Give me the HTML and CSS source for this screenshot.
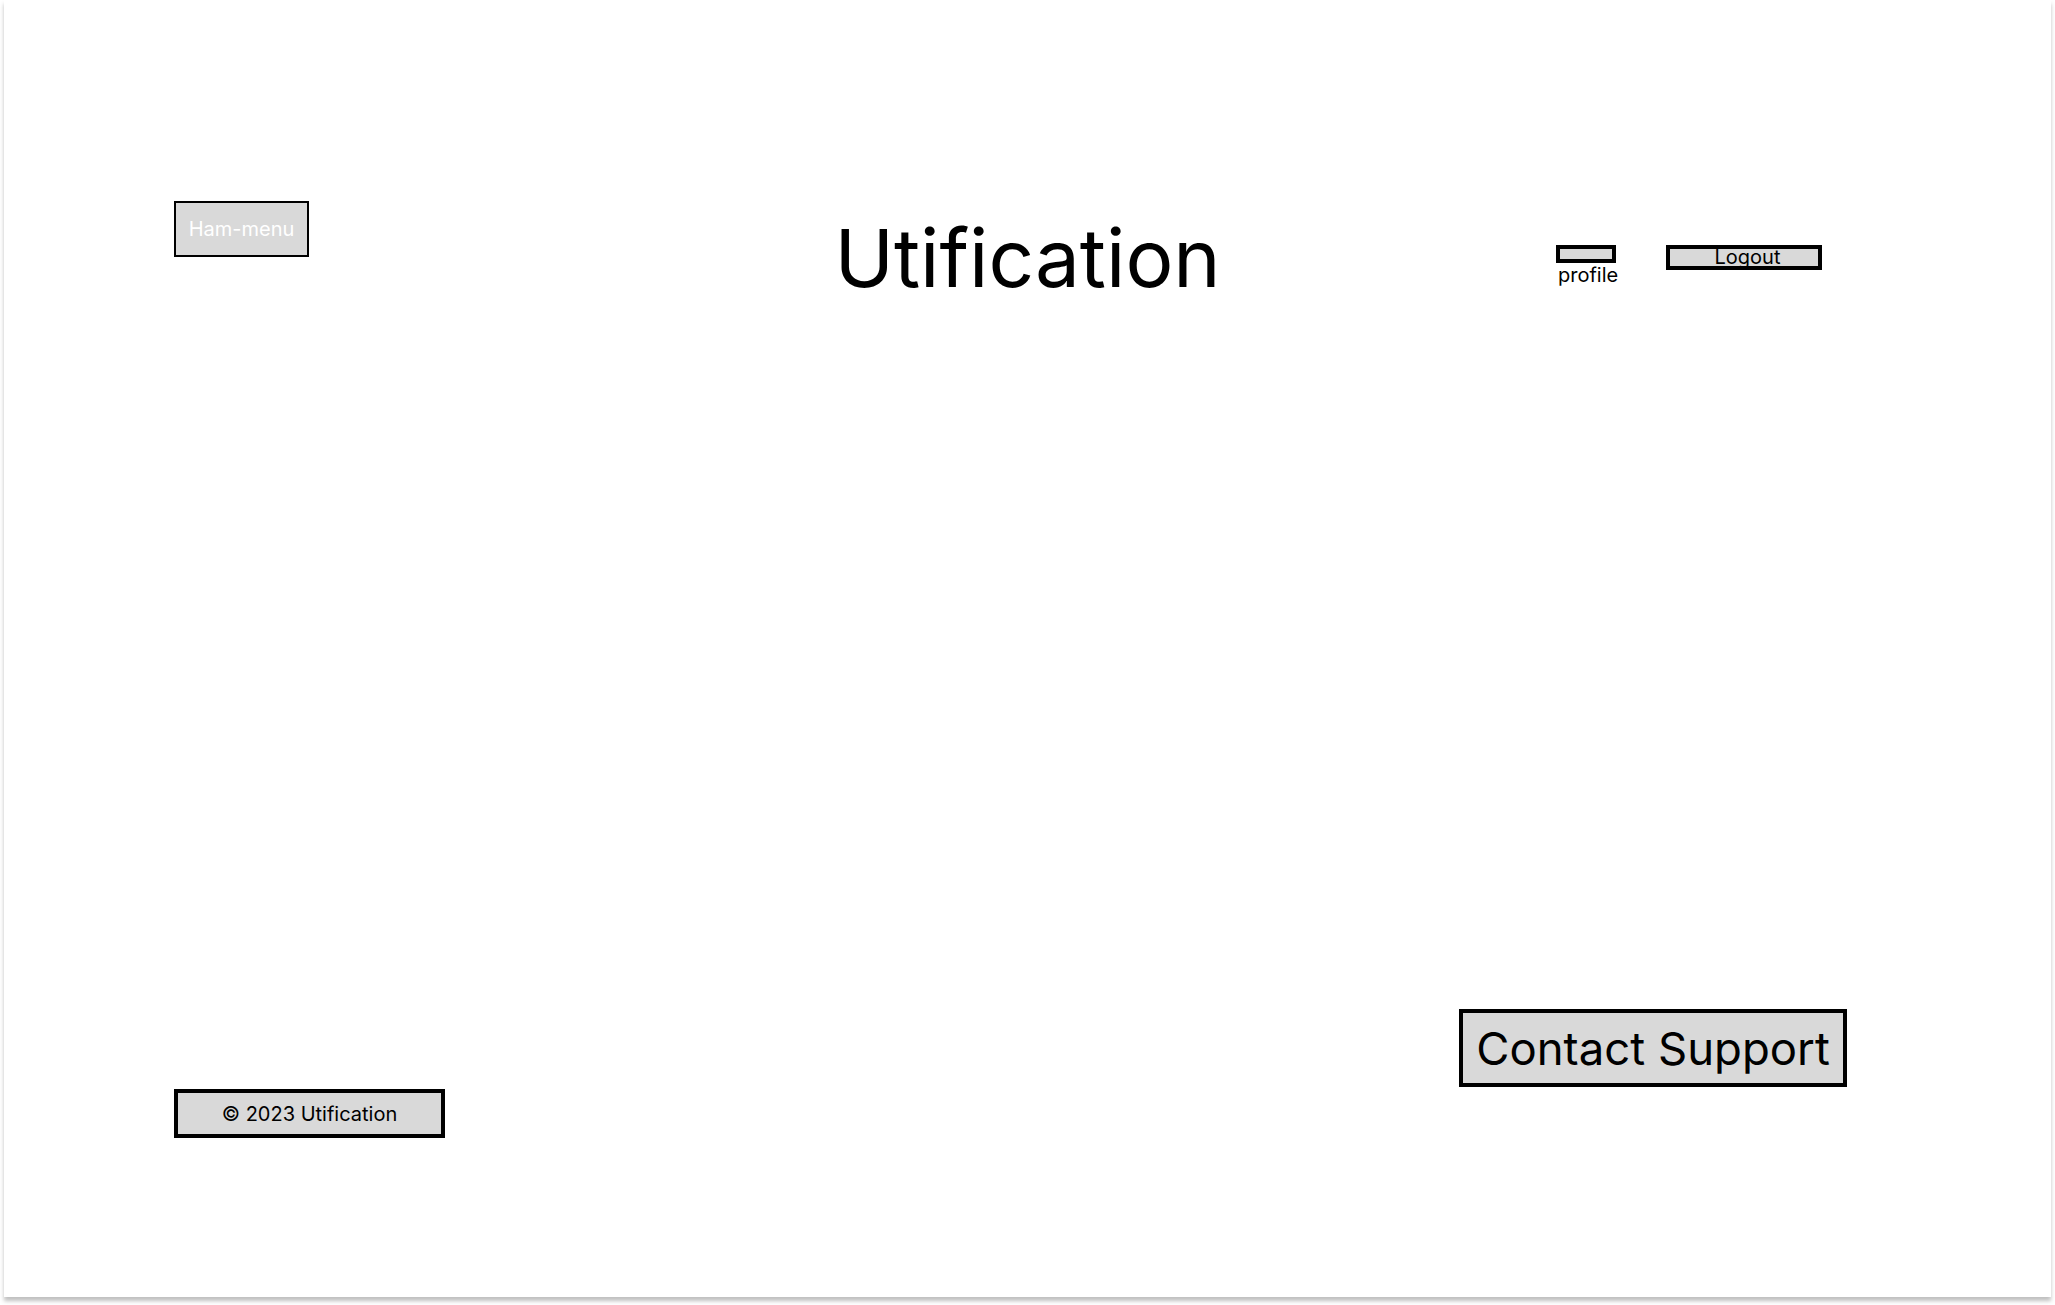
FILE: index.html
```html
<!DOCTYPE html>
<html lang="en">
<head>
<meta charset="utf-8">
<title>Utification</title>
<link rel="stylesheet" href="styles.css">
</head>
<body>
<div class="card">
  <header class="top">
    <div class="top-left">
      <button class="ham">Ham-menu</button>
    </div>
    <h1 class="title">Utification</h1>
    <div class="top-right">
      <div class="profile">
        <div class="profile-box"></div>
        <span class="profile-label">profile</span>
      </div>
      <button class="logout">Logout</button>
    </div>
  </header>
  <footer class="bottom">
    <div class="copyright">© 2023 Utification</div>
    <button class="contact">Contact Support</button>
  </footer>
</div>
</body>
</html>
```

FILE: styles.css
```css
html, body {
  margin: 0;
  padding: 0;
  background: #ffffff;
}

body {
  width: 2055px;
  height: 1305px;
  overflow: hidden;
  font-family: Inter, "Noto Sans", sans-serif;
  color: #000;
}

.card {
  margin-left: 4px;
  width: 2047px;
  height: 1297px;
  box-sizing: border-box;
  background: #fff;
  box-shadow: 0 4px 4px rgba(0, 0, 0, 0.25);
  padding: 201px 170px 159px 170px;
  display: flex;
  flex-direction: column;
  justify-content: space-between;
}

.top {
  display: grid;
  grid-template-columns: 1fr auto 1fr;
  align-items: start;
}

.top-left {
  display: flex;
}

.ham {
  width: 135px;
  height: 56px;
  box-sizing: border-box;
  border: 2px solid #000;
  background: #d9d9d9;
  color: #fff;
  font-family: Inter, sans-serif;
  font-size: 20px;
  padding: 0;
  margin: 0;
  display: flex;
  align-items: center;
  justify-content: center;
}

.title {
  margin: 9px 0 0 0;
  font-size: 80px;
  font-weight: 400;
  line-height: 1.21;
}

.top-right {
  display: flex;
  justify-content: flex-end;
  align-items: flex-start;
  gap: 50px;
  padding-right: 59px;
  padding-top: 43px;
}

.profile {
  width: 60px;
  margin-top: 1px;
  display: flex;
  flex-direction: column;
  align-items: flex-start;
}

.profile-box {
  width: 60px;
  height: 18px;
  flex: none;
  box-sizing: border-box;
  border: 4px solid #000;
  background: #d9d9d9;
}

.profile-label {
  font-size: 20px;
  line-height: 24px;
  white-space: nowrap;
  margin: 0 0 0 2px;
}

.logout {
  width: 156px;
  height: 25px;
  box-sizing: border-box;
  margin: 1px 0 0 0;
  padding: 0 0 0 7px;
  border: 4px solid #000;
  background: #d9d9d9;
  color: #000;
  font-family: Inter, sans-serif;
  font-size: 20px;
  line-height: 17px;
  overflow: hidden;
  text-align: center;
}

.bottom {
  display: flex;
  justify-content: space-between;
  align-items: flex-end;
}

.copyright {
  width: 271px;
  height: 49px;
  box-sizing: border-box;
  border: 4px solid #000;
  background: #d9d9d9;
  font-size: 20px;
  display: flex;
  align-items: center;
  justify-content: center;
}

.contact {
  width: 388px;
  height: 78px;
  box-sizing: border-box;
  margin: 0 34px 51px 0;
  padding: 0;
  border: 4px solid #000;
  background: #d9d9d9;
  color: #000;
  font-family: Inter, sans-serif;
  font-size: 45.5px;
  display: flex;
  align-items: center;
  justify-content: center;
}
```
